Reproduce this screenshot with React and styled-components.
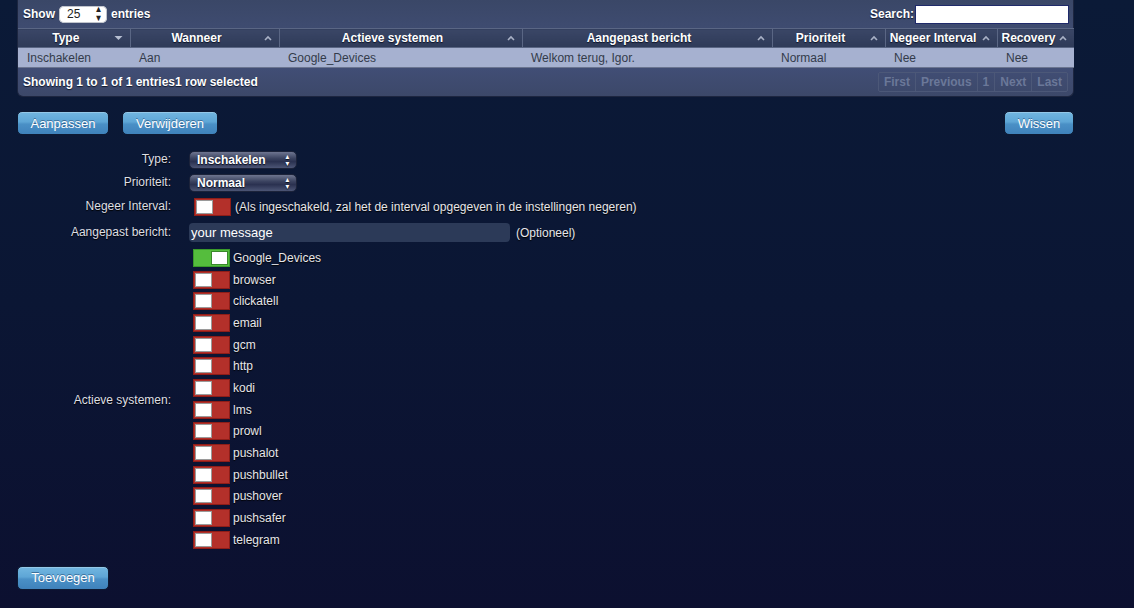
import React from "react";
import styled, { createGlobalStyle } from "styled-components";

const Global = createGlobalStyle`
  html, body { margin: 0; padding: 0; }
  body {
    background: linear-gradient(180deg, #0b1a37 0%, #0b1634 50%, #0c1030 100%);
    min-height: 608px;
    font-family: "Liberation Sans", Arial, Helvetica, sans-serif;
    font-size: 12px;
    color: #e4e4e4;
  }
`;

const Page = styled.div`
  width: 1134px;
  height: 608px;
  overflow: hidden;
`;

const Panel = styled.div`
  margin: 0 60px 0 17px;
  width: 1057px;
  background: linear-gradient(180deg, #3a4767 0%, #43507a 60%, #3c4869 100%);
  border: 1px solid #1d2640;
  border-top: none;
  border-radius: 0 0 6px 6px;
  box-sizing: border-box;
  text-shadow: 0 1px 1px #10172b;
`;

const TopBar = styled.div`
  display: flex;
  align-items: center;
  justify-content: space-between;
  height: 28px;
  padding: 0 4px 0 5px;
  color: #fff;
  font-weight: bold;
  font-size: 12px;
`;

const Inline = styled.div`
  display: flex;
  align-items: center;
  gap: ${(p) => p.$gap ?? 4}px;
`;

const LenSelect = styled.div`
  width: 48px;
  height: 17px;
  background: #fff;
  border-radius: 5px;
  color: #222;
  font-weight: normal;
  text-shadow: none;
  font-size: 12px;
  display: flex;
  align-items: center;
  justify-content: space-between;
  padding: 0 4px 0 8px;
  box-sizing: border-box;
  box-shadow: inset 0 0 0 1px #c0c4cc;
`;

const Updown = styled.span`
  font-size: ${(p) => p.$size || 9}px;
  line-height: 1;
  color: ${(p) => p.$color || "#222"};
  transform: scaleX(0.9);
`;

const SearchBox = styled.div`
  width: 154px;
  height: 19px;
  background: #fff;
  border: 1px solid #1f2a6a;
  box-sizing: border-box;
  margin-top: 1px;
`;

const Table = styled.table`
  width: 100%;
  border-collapse: collapse;
  table-layout: fixed;
`;

const Th = styled.th`
  position: relative;
  height: 18px;
  padding: 0 20px 0 4px;
  background: linear-gradient(180deg, #3a4666 0%, #2e3a58 100%);
  border: 1px solid #5a6684;
  color: #fff;
  font-weight: bold;
  font-size: 12px;
  text-align: center;
  white-space: nowrap;
  text-shadow: 0 1px 1px #0c1226;
  &:first-child { border-left: none; }
  &:last-child { border-right: none; }
`;

const SortIcon = styled.span`
  position: absolute;
  right: 7px;
  top: 50%;
  transform: translateY(-50%);
  display: flex;
`;

const Td = styled.td`
  height: 19px;
  padding: 0 0 0 9px;
  background: #a6b1d0;
  color: #333b4a;
  font-size: 12px;
  text-shadow: none;
  white-space: nowrap;
  border-bottom: 1px solid #6b7590;
`;

const Footer = styled.div`
  display: flex;
  align-items: center;
  justify-content: space-between;
  height: 28px;
  padding: 0 5px 0 5px;
  color: #fff;
  font-weight: bold;
  font-size: 12px;
`;

const Pager = styled.div`
  display: flex;
  border: 1px solid #4c5878;
  border-radius: 2px;
`;

const PageBtn = styled.span`
  padding: 0 5px;
  height: 18px;
  line-height: 18px;
  color: #6b7899;
  font-weight: bold;
  text-shadow: none;
  border-left: 1px solid #4c5878;
  &:first-child { border-left: none; }
`;

const ButtonRow = styled.div`
  display: flex;
  align-items: center;
  gap: 13px;
  margin: 14px 60px 0 17px;
  height: 24px;
`;

const Btn = styled.button`
  height: 24px;
  width: ${(p) => p.$w}px;
  padding: 0;
  border: 1px solid #0d1a33;
  border-radius: 5px;
  background: linear-gradient(180deg, #72b6e0 0%, #5ea6d6 45%, #4a90c6 55%, #3f82bb 100%);
  color: #fff;
  font-family: "Liberation Sans", Arial, sans-serif;
  font-size: 13px;
  text-shadow: 0 -1px 0 rgba(20, 50, 90, 0.5);
  box-shadow: inset 0 1px 0 rgba(255, 255, 255, 0.25);
  cursor: pointer;
  ${(p) => (p.$right ? "margin-left: auto;" : "")}
`;

const Form = styled.div`
  display: grid;
  grid-template-columns: 154px 1fr;
  column-gap: 18px;
  margin: 13px 0 0 17px;
  align-items: center;
`;

const Label = styled.div`
  text-align: right;
  color: #dedfe4;
  font-size: 12px;
  height: ${(p) => p.$h || 23}px;
  line-height: ${(p) => p.$h || 23}px;
  text-shadow: 0 1px 1px #000;
`;

const Field = styled.div`
  display: flex;
  align-items: center;
  gap: 4px;
  height: ${(p) => p.$h || 23}px;
  color: #e6e6ea;
  text-shadow: 0 1px 1px #000;
`;

const Select = styled.div`
  width: 108px;
  height: 18px;
  border-radius: 5px;
  box-sizing: border-box;
  padding: 0 5px 0 7px;
  display: flex;
  align-items: center;
  justify-content: space-between;
  background: linear-gradient(180deg, #6e7590 0%, #3b4360 40%, #2a3150 60%, #4c5575 100%);
  border: 1px solid #1c233a;
  color: #fff;
  font-weight: bold;
  font-size: 12px;
  text-shadow: 0 1px 1px #0a0f1e;
`;

const TextInput = styled.div`
  width: 321px;
  height: 19px;
  border-radius: 4px;
  background: #2c3a58;
  color: #fff;
  font-size: 13px;
  line-height: 19px;
  padding-left: 2px;
  box-sizing: border-box;
  text-shadow: none;
`;

const Hint = styled.span`
  margin-left: ${(p) => p.$ml || 0}px;
`;

const Toggle = styled.span`
  flex: none;
  position: relative;
  display: inline-block;
  width: 37px;
  height: 18px;
  margin-left: ${(p) => p.$ml ?? 4}px;
  box-sizing: border-box;
  border: 1px solid ${(p) => (p.$on ? "#3a9a2a" : "#8e1d18")};
  background: ${(p) => (p.$on ? "#55bd3d" : "#b3302a")};
`;

const Knob = styled.span`
  position: absolute;
  top: 1px;
  ${(p) => (p.$on ? "right: 1px;" : "left: 1px;")}
  width: 17px;
  height: 14px;
  background: #fff;
  border: 1px solid ${(p) => (p.$on ? "#3a8a2a" : "#9a9a9a")};
  box-sizing: border-box;
`;

const SystemList = styled.div`
  display: flex;
  flex-direction: column;
  padding: 1px 0 4px;
`;

const SystemRow = styled.div`
  display: flex;
  align-items: center;
  gap: 3px;
  height: 21.7px;
  color: #e6e6ea;
  text-shadow: 0 1px 1px #000;
`;

const BottomRow = styled.div`
  margin: 11px 0 0 17px;
`;

const ArrowUp = () => (
  <svg width="8" height="6" viewBox="0 0 8 6">
    <path d="M1 5 L4 2 L7 5" stroke="#a9b1c6" strokeWidth="1.6" fill="none" />
  </svg>
);

const ArrowDown = () => (
  <svg width="9" height="6" viewBox="0 0 9 6">
    <path d="M0.5 1 L8.5 1 L4.5 5 Z" fill="#b7bfd2" />
  </svg>
);

const columns = [
  { title: "Type", w: 112, down: true },
  { title: "Wanneer", w: 149 },
  { title: "Actieve systemen", w: 243 },
  { title: "Aangepast bericht", w: 250 },
  { title: "Prioriteit", w: 113 },
  { title: "Negeer Interval", w: 112 },
  { title: "Recovery", w: 77 },
];

const row = ["Inschakelen", "Aan", "Google_Devices", "Welkom terug, Igor.", "Normaal", "Nee", "Nee"];

const systems = [
  { name: "Google_Devices", on: true },
  { name: "browser" },
  { name: "clickatell" },
  { name: "email" },
  { name: "gcm" },
  { name: "http" },
  { name: "kodi" },
  { name: "lms" },
  { name: "prowl" },
  { name: "pushalot" },
  { name: "pushbullet" },
  { name: "pushover" },
  { name: "pushsafer" },
  { name: "telegram" },
];

const Sw = ({ on, ml }) => (
  <Toggle $on={on} $ml={ml}>
    <Knob $on={on} />
  </Toggle>
);

const SelectArrows = () => (
  <Updown $size={7} $color="#fff">
    ▲<br />▼
  </Updown>
);

export default function App() {
  return (
    <Page>
      <Global />
      <Panel>
        <TopBar>
          <Inline>
            Show
            <LenSelect>
              25 <Updown>▲<br />▼</Updown>
            </LenSelect>
            entries
          </Inline>
          <Inline $gap={1}>
            Search:
            <SearchBox />
          </Inline>
        </TopBar>
        <Table>
          <colgroup>
            {columns.map((c) => (
              <col key={c.title} style={{ width: c.w }} />
            ))}
          </colgroup>
          <thead>
            <tr>
              {columns.map((c) => (
                <Th key={c.title}>
                  {c.title}
                  <SortIcon>{c.down ? <ArrowDown /> : <ArrowUp />}</SortIcon>
                </Th>
              ))}
            </tr>
          </thead>
          <tbody>
            <tr>
              {row.map((v, i) => (
                <Td key={i}>{v}</Td>
              ))}
            </tr>
          </tbody>
        </Table>
        <Footer>
          <span>Showing 1 to 1 of 1 entries1 row selected</span>
          <Pager>
            <PageBtn>First</PageBtn>
            <PageBtn>Previous</PageBtn>
            <PageBtn>1</PageBtn>
            <PageBtn>Next</PageBtn>
            <PageBtn>Last</PageBtn>
          </Pager>
        </Footer>
      </Panel>

      <ButtonRow>
        <Btn $w={92}>Aanpassen</Btn>
        <Btn $w={96}>Verwijderen</Btn>
        <Btn $w={70} $right>Wissen</Btn>
      </ButtonRow>

      <Form>
        <Label>Type:</Label>
        <Field>
          <Select>
            Inschakelen <SelectArrows />
          </Select>
        </Field>
        <Label>Prioriteit:</Label>
        <Field>
          <Select>
            Normaal <SelectArrows />
          </Select>
        </Field>
        <Label $h={25}>Negeer Interval:</Label>
        <Field $h={25}>
          <Sw ml={5} />
          <span>(Als ingeschakeld, zal het de interval opgegeven in de instellingen negeren)</span>
        </Field>
        <Label $h={27}>Aangepast bericht:</Label>
        <Field $h={27}>
          <TextInput>your message</TextInput>
          <Hint $ml={2}>(Optioneel)</Hint>
        </Field>
        <Label>Actieve systemen:</Label>
        <SystemList>
          {systems.map((s) => (
            <SystemRow key={s.name}>
              <Sw on={s.on} />
              <span>{s.name}</span>
            </SystemRow>
          ))}
        </SystemList>
      </Form>

      <BottomRow>
        <Btn $w={92}>Toevoegen</Btn>
      </BottomRow>
    </Page>
  );
}
